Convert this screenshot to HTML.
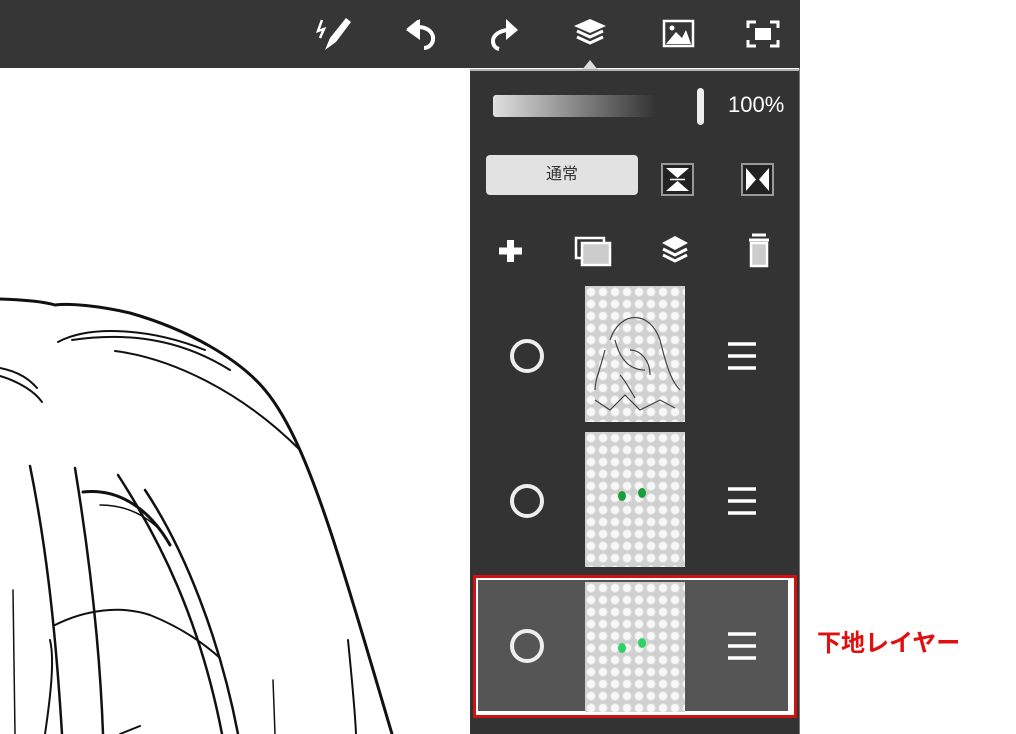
<!DOCTYPE html>
<html><head><meta charset="utf-8"><style>
body{margin:0;width:1016px;height:734px;background:#fff;position:relative;overflow:hidden;font-family:"Liberation Sans","Noto Sans CJK JP",sans-serif}
.a{position:absolute}
.chk{background-color:#f4f4f4;background-image:radial-gradient(circle,#f8f8f8 40%,#d0d0d0 60%);background-size:12px 12px}
</style></head><body>
<div class="a" style="left:0;top:0;width:800px;height:68px;background:#363636"></div>
<svg class="a" style="left:0;top:0" width="1016" height="734">
<g fill="none" stroke="#111" stroke-width="3" stroke-linecap="round">
<path d="M0,299 C30,300 45,302 55,305 C70,303 100,306 130,313 C190,330 240,360 265,390 C290,420 310,470 330,530 C350,590 370,660 392,734"/>
<path d="M58,342 C90,325 150,328 205,350" stroke-width="2"/>
<path d="M72,340 C140,330 190,345 230,370" stroke-width="2"/>
<path d="M115,351 C170,358 240,390 300,450" stroke-width="2"/>
<path d="M0,368 C20,372 30,380 37,388" stroke-width="2"/>
<path d="M0,376 C20,382 35,392 42,402" stroke-width="2"/>
<path d="M30,466 C45,540 55,620 62,734" stroke-width="2.5"/>
<path d="M75,468 C90,560 100,650 103,734" stroke-width="2.5"/>
<path d="M118,475 C160,540 200,620 222,734" stroke-width="2.5"/>
<path d="M145,490 C185,550 220,640 238,734" stroke-width="2.5"/>
<path d="M83,492 C120,488 150,510 170,545" stroke-width="3"/>
<path d="M100,505 C125,505 145,515 160,530" stroke-width="1.5"/>
<path d="M55,625 C85,610 120,605 150,615 C175,625 200,640 220,658" stroke-width="2"/>
<path d="M50,640 C55,660 50,700 45,734" stroke-width="2"/>
<path d="M13,590 L15,734" stroke-width="1.5"/>
<path d="M348,640 C352,680 355,710 356,734" stroke-width="2"/>
<path d="M273,680 L275,734" stroke-width="1.5"/>
<path d="M120,734 L140,726" stroke-width="2"/>
</g>
<g fill="#fff" stroke="#fff">
<path d="M325,50 L330,38 L346,18 L351,22 L336,42 Z" stroke="none"/>
<path d="M322,20 L318,31 L324,29 L320,38" fill="none" stroke-width="2.5"/>
<path d="M408,30 L418,22 L418,27 C428,27 434,33 433,40 C432,45 428,48 424,48" fill="none" stroke-width="4" stroke-linejoin="round"/>
<path d="M406,30 L420,19 L420,40 Z" stroke="none"/>
<path d="M518,30 L506,19 L506,40 Z" stroke="none"/>
<path d="M510,30 C500,30 493,35 493,41 C493,45 495,48 499,49" fill="none" stroke-width="4"/>
<path d="M590,19 L606,26 L590,33 L574,26 Z" stroke="none"/>
<path d="M577,31 L590,37 L603,31" fill="none" stroke-width="3"/>
<path d="M577,37 L590,43 L603,37" fill="none" stroke-width="3"/>
<path d="M582,70 L590,60 L598,70 Z" stroke="none" fill="#ddd"/>
<rect x="664" y="21" width="29" height="25" fill="none" stroke-width="2.5"/>
<path d="M666,44 L676,32 L682,38 L686,30 L691,44 Z" stroke="none"/>
<circle cx="672" cy="28" r="2.5" stroke="none"/>
<path d="M748,28 V22 H756 M770,22 H778 V28 M778,40 V46 H770 M756,46 H748 V40" fill="none" stroke-width="3"/>
<rect x="755" y="28" width="16" height="12" stroke="none"/>
</g>
<line x1="470" y1="70" x2="800" y2="70" stroke="#999" stroke-width="1.5"/>
</svg>
<div class="a" style="left:470px;top:71px;width:330px;height:663px;background:#333"></div>
<div class="a" style="left:799px;top:68px;width:1px;height:666px;background:#777"></div>
<div class="a" style="left:493px;top:95px;width:163px;height:22px;border-radius:3px;background:linear-gradient(90deg,#e0e0e0,#888 50%,#333)"></div>
<div class="a" style="left:697px;top:88px;width:7px;height:37px;border-radius:4px;background:#eee"></div>
<div class="a" style="left:728px;top:92px;color:#fff;font-size:22px">100%</div>
<div class="a" style="left:486px;top:155px;width:152px;height:40px;border-radius:4px;background:#e2e2e2;color:#333;font-size:16px;line-height:40px;text-align:center">通常</div>
<svg class="a" style="left:470px;top:71px" width="330" height="663">
<g fill="#fff" stroke="#fff">
<rect x="192" y="93" width="31" height="31" fill="#222" stroke="#999" stroke-width="2"/>
<path d="M196,97 H219 L207.5,107 Z M196,120 H219 L207.5,110 Z" stroke="none"/>
<line x1="200" y1="108.5" x2="215" y2="108.5" stroke-width="1.5"/>
<rect x="272" y="93" width="31" height="31" fill="#222" stroke="#999" stroke-width="2"/>
<path d="M276,97 V120 L286,108.5 Z M299,97 V120 L289,108.5 Z" stroke="none"/>
<path d="M29,180 H52 M40.5,169 V191" stroke-width="7" fill="none"/>
<rect x="106" y="167" width="28" height="20" fill="none" stroke-width="2.5"/>
<rect x="112" y="172" width="28" height="22" fill="#ccc" stroke-width="2.5"/>
<path d="M205,165 L218,172 L205,179 L192,172 Z" stroke="none"/>
<path d="M193,178 L205,184 L217,178 M193,184 L205,190 L217,184" fill="none" stroke-width="3"/>
<path d="M282,164 H296 M279,169 H299" stroke-width="3"/>
<rect x="281" y="172" width="16" height="23" fill="#ccc" stroke-width="2.5"/>
</g>
</svg>
<div class="a" style="left:473px;top:575px;width:318px;height:137px;border:3px solid #d21010;background:#fff"></div>
<div class="a" style="left:478px;top:580px;width:310px;height:131px;background:#555"></div>
<div class="a chk" style="left:585px;top:286px;width:100px;height:136px"></div>
<div class="a chk" style="left:585px;top:432px;width:100px;height:135px"></div>
<div class="a chk" style="left:585px;top:582px;width:100px;height:130px"></div>
<svg class="a" style="left:470px;top:280px" width="340" height="454">
<g fill="none" stroke="#444" stroke-width="1.2">
<path d="M140,60 C150,30 180,30 190,60 C195,80 200,100 210,110"/>
<path d="M135,70 C130,90 125,100 125,110 M145,60 C150,80 160,90 175,90 M160,70 C170,70 180,80 180,95"/>
<path d="M125,120 L140,130 L155,115 L170,130 L190,120 L205,128 M150,95 C155,100 160,110 165,118"/>
</g>
<g fill="#1a9e3a"><ellipse cx="152" cy="216" rx="4" ry="5"/><ellipse cx="172" cy="213" rx="4" ry="5"/></g>
<g fill="#2ed166"><ellipse cx="152" cy="368" rx="4" ry="5"/><ellipse cx="172" cy="363" rx="4" ry="5"/></g>
<g fill="none" stroke="#eee" stroke-width="4">
<circle cx="57" cy="76" r="15"/><circle cx="57" cy="221" r="15"/><circle cx="57" cy="366" r="15"/>
</g>
<g stroke="#fff" stroke-width="3.5">
<path d="M258,64 H286 M258,76 H286 M258,88 H286"/>
<path d="M258,209 H286 M258,221 H286 M258,233 H286"/>
<path d="M258,354 H286 M258,366 H286 M258,378 H286"/>
</g>
</svg>
<div class="a" style="left:817px;top:623px;color:#e01010;font-size:24px;font-weight:bold">下地レイヤー</div>
</body></html>
